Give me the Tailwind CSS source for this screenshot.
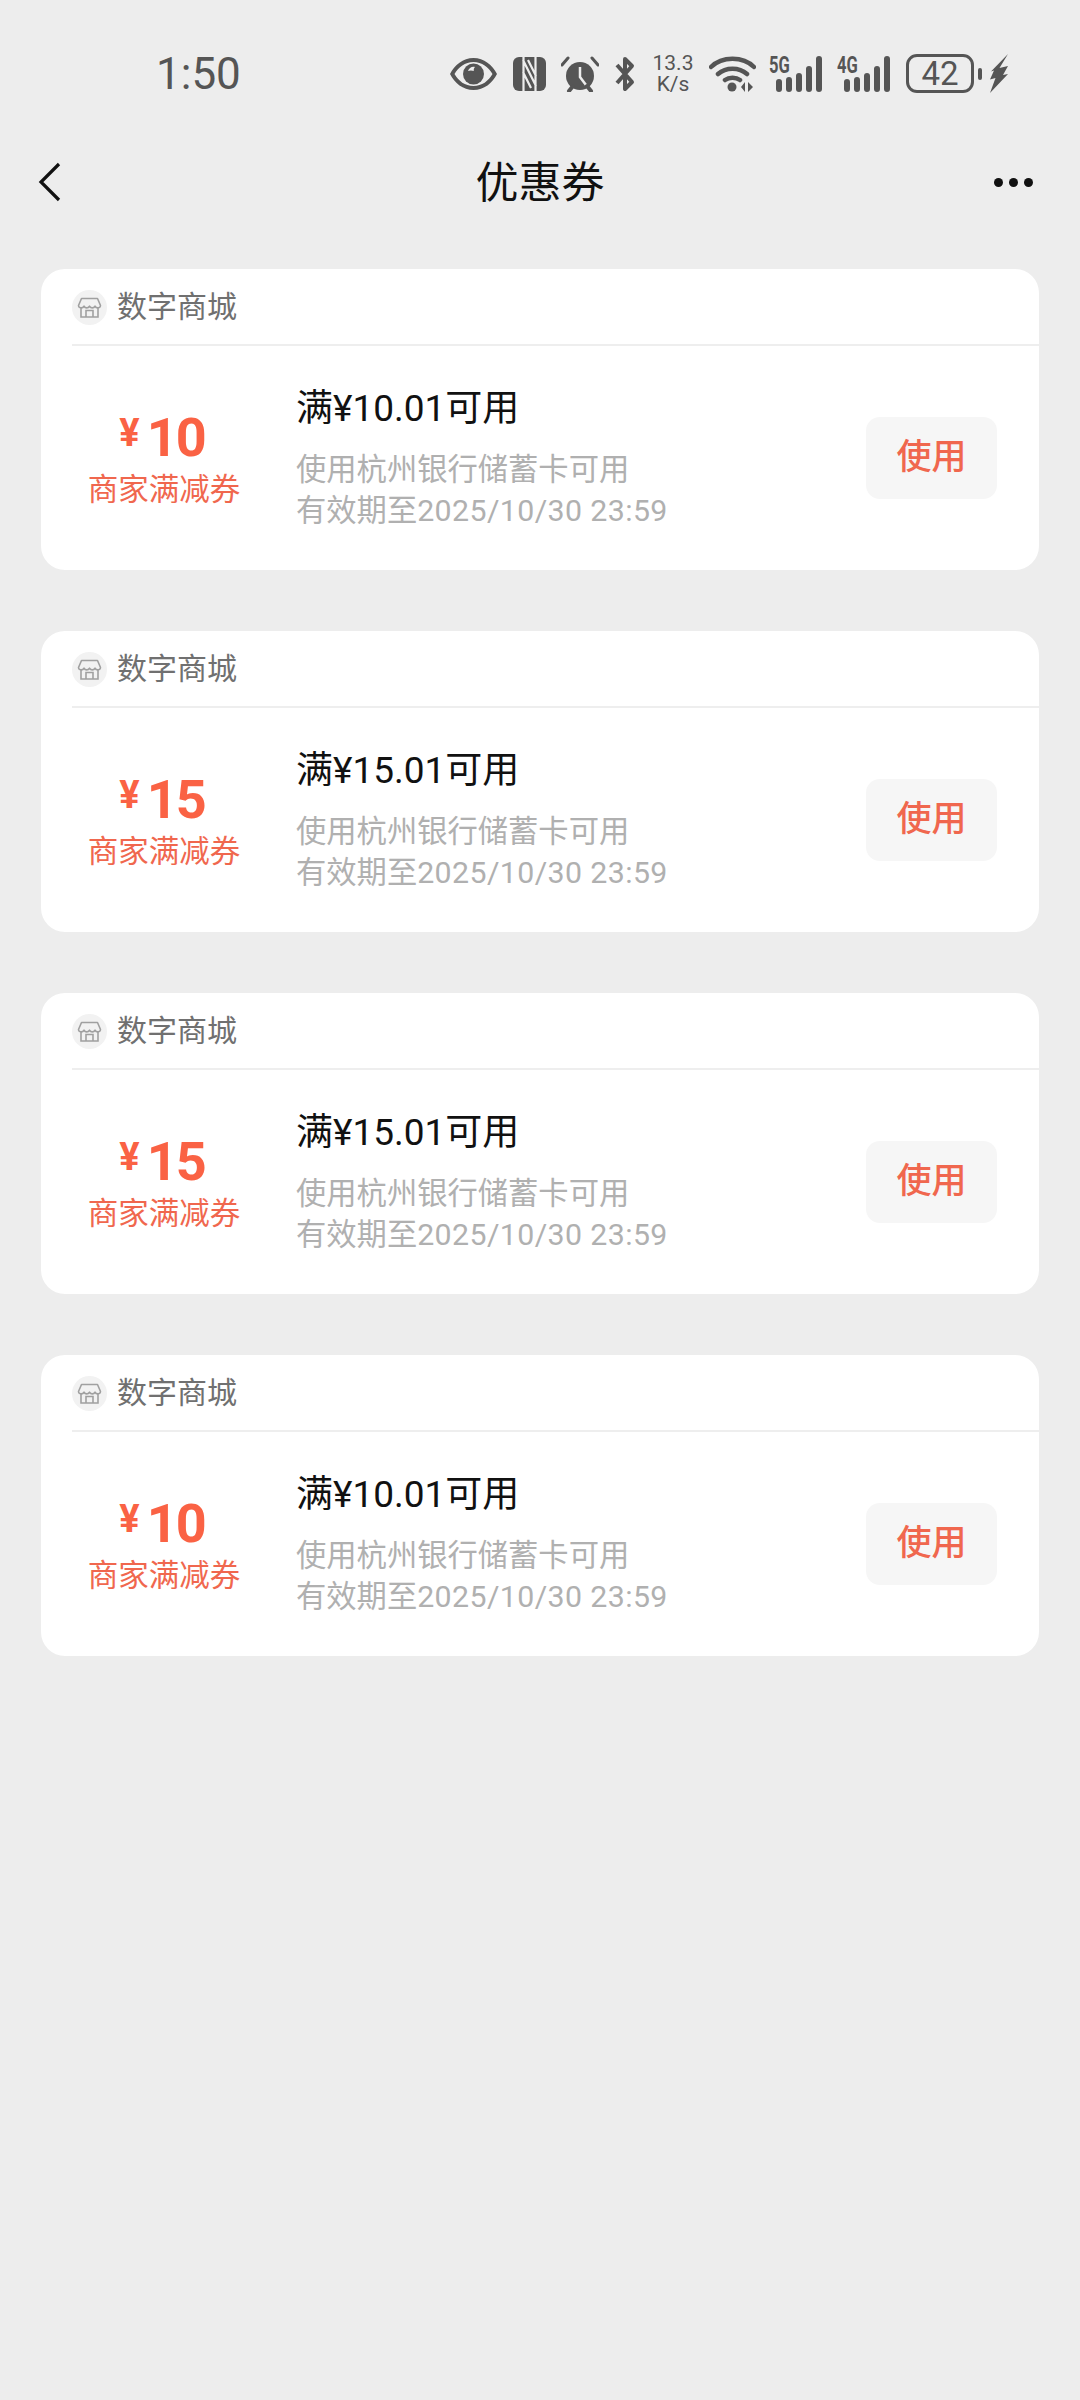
<!DOCTYPE html>
<html lang="zh-CN">
<head>
  <meta charset="UTF-8" />
  <title>优惠券</title>
  <script src="https://cdn.jsdelivr.net/npm/@tailwindcss/browser@4"></script>
</head>
<body class="bg-[#ededed] min-h-screen font-['Roboto','Noto_Sans_CJK_SC',sans-serif]">
  <svg width="0" height="0" class="absolute">
    <symbol id="store" viewBox="0 0 35 35">
      <circle cx="17.5" cy="17.500" r="17.500" fill="#f2f2f2" />
      <path d="M9.500 8.500h16l3 7c-.3 3-4.300 3-5.500.6-1.200 2.400-4.200 2.400-5.500 0-1.300 2.400-4.300 2.400-5.500 0-1.200 2.400-5.200 2.400-5.500-.6z" fill="none" stroke="#a0a0a0" stroke-width="1.600" stroke-linejoin="round" />
      <path d="M9 17v10h17V17M14 27v-6.500h7V27" fill="none" stroke="#a0a0a0" stroke-width="1.600" />
    </symbol>
    <symbol id="bars" viewBox="0 0 54 36">
      <path d="M10 33V26M20 33V24M30 33V20M40 33V13M50 33V3" stroke="#555" stroke-width="6" stroke-linecap="round" />
    </symbol>
  </svg>

  <!-- status bar -->
  <div class="h-[146px] flex items-start text-[#555555]">
    <div class="w-[450px] pt-[49px] pl-[156px] text-[44px] leading-[50px]">1:50</div>
    <div class="flex items-center h-[41px] mt-[53px] shrink-0">
      <svg class="w-[47px] h-[32px]" viewBox="0 0 47 32"><path fill-rule="evenodd" fill="#555" d="M23.500 0C34 0 42.500 7 47 16c-4.500 9-13 16-23.500 16S4.500 25 0 16C4.500 7 13 0 23.500 0zm0 4C15 4 8.500 9 4.500 16c4 7 10.500 12 19 12s15-5 19-12c-4-7-10.500-12-19-12z" /><circle cx="23.500" cy="16" r="10.500" fill="#555" /><path fill="#ededed" d="M18 13c1-3 4-5 7-4-1 1-1.500 2.500-1.200 4-1.800-.8-4-.8-5.800 0z" /></svg>
      <svg class="w-[33px] h-[34px] ml-[16px]" viewBox="0 0 33 34"><rect width="33" height="34" rx="6" fill="#555" /><path d="M10.500 0v34M22.500 0v34M10 3l13 26M10 15l8 16M15 3l8 16" fill="none" stroke="#ededed" stroke-width="2.200" /></svg>
      <svg class="w-[38px] h-[36px] ml-[15px]" viewBox="0 0 38 36"><circle cx="19" cy="20" r="14" fill="#555" /><path d="M19 11v10l6 8" fill="none" stroke="#ededed" stroke-width="2.500" /><path d="M1 9l6-7M37 9l-6-7" stroke="#555" stroke-width="3" stroke-linecap="round" /><path d="M8 35l4-5M30 35l-4-5" stroke="#555" stroke-width="4" stroke-linecap="round" /></svg>
      <svg class="w-[22px] h-[36px] ml-[15px]" viewBox="0 0 22 36"><path d="M3 9l15 17-7 7V3l7 7L3 27" fill="none" stroke="#555" stroke-width="4" stroke-linejoin="round" /></svg>
      <div class="w-[42px] ml-[16px] text-center text-[21px] leading-[21px]">13.3<br />K/s</div>
      <svg class="w-[47px] h-[37px] ml-[15px]" viewBox="0 0 47 37"><path d="M2 12C13 1 34 1 45 12M9 19c8-7 21-7 29 0M16 25c4-3 11-3 15 0" fill="none" stroke="#555" stroke-width="4.500" stroke-linecap="round" /><circle cx="23" cy="32" r="4.500" fill="#555" /><path fill="#555" d="M36 27v10l-4-5zM39 27v10l5-5z" /></svg>
      <div class="ml-[13px] w-[54px] h-[36px] relative">
        <span class="absolute left-0 top-0 text-[23px] leading-[20px] font-bold scale-x-[.72] origin-left">5G</span>
        <svg class="w-[54px] h-[36px]"><use href="#bars" /></svg>
      </div>
      <div class="ml-[14px] w-[54px] h-[36px] relative">
        <span class="absolute left-0 top-0 text-[23px] leading-[20px] font-bold scale-x-[.72] origin-left">4G</span>
        <svg class="w-[54px] h-[36px]"><use href="#bars" /></svg>
      </div>
      <div class="ml-[15px] w-[68px] h-[39px] rounded-[11px] border-[3px] border-[#555555] flex items-center justify-center text-[33px] leading-none">42</div>
      <div class="ml-[4px] w-[4px] h-[12px] bg-[#555555] rounded-full"></div>
      <svg class="w-[18px] h-[39px] ml-[8px]" viewBox="0 0 18 39"><path fill="#555" d="M18 0L9.500 14l8.500-2-5 9 5-1L0 39l5.500-15L0 25.500l4-9-3 1z" /></svg>
    </div>
  </div>

  <!-- nav -->
  <div class="h-[74px] relative flex items-center justify-center">
    <svg class="absolute left-[38px] top-[16px] w-[23px] h-[40px]" viewBox="0 0 23 40"><path d="M21 2L3 20l18 18" fill="none" stroke="#111" stroke-width="3.200" /></svg>
    <h1 class="text-[43px] leading-none text-[#111111]">优惠券</h1>
    <div class="absolute left-[994px] top-[32px] flex gap-[6px]">
      <span class="w-[9px] h-[9px] rounded-full bg-[#111111]"></span>
      <span class="w-[9px] h-[9px] rounded-full bg-[#111111]"></span>
      <span class="w-[9px] h-[9px] rounded-full bg-[#111111]"></span>
    </div>
  </div>

  <!-- coupons -->
  <div class="mt-[49px] px-[41px] flex flex-col gap-[61px]">

    <div class="bg-white rounded-[24px] h-[301px] flex flex-col">
      <div class="ml-[31px] h-[77px] border-b-[2px] border-[#eeeeee] flex items-center gap-[10px]">
        <svg class="w-[35px] h-[35px] mt-[2px]"><use href="#store" /></svg>
        <span class="text-[30px] leading-none text-[#707070]">数字商城</span>
      </div>
      <div class="flex-1 flex items-center pr-[42px]">
        <div class="w-[246px] flex flex-col items-center mt-[6px]">
          <div class="flex items-start gap-[7px] mr-[4px] text-[#fa6244] font-bold leading-[56px] mt-[-5px]"><span class="text-[38px] mt-[-5px]">¥</span><span class="text-[54px] tracking-[-2px]">10</span></div>
          <div class="mt-[6px] text-[30.5px] leading-[36px] text-[#f0674e]">商家满减券</div>
        </div>
        <div class="w-[9px]"></div>
        <div class="flex-1">
          <div class="text-[37px] leading-[46px] text-[#111111]">满¥10.01可用</div>
          <div class="mt-[17px] text-[30.3px] leading-[41px] text-[#b0b0b0]">使用杭州银行储蓄卡可用<br />有效期至<span class="tracking-[.4px]">2025/10/30 23:59</span></div>
        </div>
        <div class="w-[131px] h-[82px] rounded-[14px] bg-[#f6f6f6] flex items-center justify-center text-[35px] font-medium text-[#f0674e]">使用</div>
      </div>
    </div>

    <div class="bg-white rounded-[24px] h-[301px] flex flex-col">
      <div class="ml-[31px] h-[77px] border-b-[2px] border-[#eeeeee] flex items-center gap-[10px]">
        <svg class="w-[35px] h-[35px] mt-[2px]"><use href="#store" /></svg>
        <span class="text-[30px] leading-none text-[#707070]">数字商城</span>
      </div>
      <div class="flex-1 flex items-center pr-[42px]">
        <div class="w-[246px] flex flex-col items-center mt-[6px]">
          <div class="flex items-start gap-[7px] mr-[4px] text-[#fa6244] font-bold leading-[56px] mt-[-5px]"><span class="text-[38px] mt-[-5px]">¥</span><span class="text-[54px] tracking-[-2px]">15</span></div>
          <div class="mt-[6px] text-[30.5px] leading-[36px] text-[#f0674e]">商家满减券</div>
        </div>
        <div class="w-[9px]"></div>
        <div class="flex-1">
          <div class="text-[37px] leading-[46px] text-[#111111]">满¥15.01可用</div>
          <div class="mt-[17px] text-[30.3px] leading-[41px] text-[#b0b0b0]">使用杭州银行储蓄卡可用<br />有效期至<span class="tracking-[.4px]">2025/10/30 23:59</span></div>
        </div>
        <div class="w-[131px] h-[82px] rounded-[14px] bg-[#f6f6f6] flex items-center justify-center text-[35px] font-medium text-[#f0674e]">使用</div>
      </div>
    </div>

    <div class="bg-white rounded-[24px] h-[301px] flex flex-col">
      <div class="ml-[31px] h-[77px] border-b-[2px] border-[#eeeeee] flex items-center gap-[10px]">
        <svg class="w-[35px] h-[35px] mt-[2px]"><use href="#store" /></svg>
        <span class="text-[30px] leading-none text-[#707070]">数字商城</span>
      </div>
      <div class="flex-1 flex items-center pr-[42px]">
        <div class="w-[246px] flex flex-col items-center mt-[6px]">
          <div class="flex items-start gap-[7px] mr-[4px] text-[#fa6244] font-bold leading-[56px] mt-[-5px]"><span class="text-[38px] mt-[-5px]">¥</span><span class="text-[54px] tracking-[-2px]">15</span></div>
          <div class="mt-[6px] text-[30.5px] leading-[36px] text-[#f0674e]">商家满减券</div>
        </div>
        <div class="w-[9px]"></div>
        <div class="flex-1">
          <div class="text-[37px] leading-[46px] text-[#111111]">满¥15.01可用</div>
          <div class="mt-[17px] text-[30.3px] leading-[41px] text-[#b0b0b0]">使用杭州银行储蓄卡可用<br />有效期至<span class="tracking-[.4px]">2025/10/30 23:59</span></div>
        </div>
        <div class="w-[131px] h-[82px] rounded-[14px] bg-[#f6f6f6] flex items-center justify-center text-[35px] font-medium text-[#f0674e]">使用</div>
      </div>
    </div>

    <div class="bg-white rounded-[24px] h-[301px] flex flex-col">
      <div class="ml-[31px] h-[77px] border-b-[2px] border-[#eeeeee] flex items-center gap-[10px]">
        <svg class="w-[35px] h-[35px] mt-[2px]"><use href="#store" /></svg>
        <span class="text-[30px] leading-none text-[#707070]">数字商城</span>
      </div>
      <div class="flex-1 flex items-center pr-[42px]">
        <div class="w-[246px] flex flex-col items-center mt-[6px]">
          <div class="flex items-start gap-[7px] mr-[4px] text-[#fa6244] font-bold leading-[56px] mt-[-5px]"><span class="text-[38px] mt-[-5px]">¥</span><span class="text-[54px] tracking-[-2px]">10</span></div>
          <div class="mt-[6px] text-[30.5px] leading-[36px] text-[#f0674e]">商家满减券</div>
        </div>
        <div class="w-[9px]"></div>
        <div class="flex-1">
          <div class="text-[37px] leading-[46px] text-[#111111]">满¥10.01可用</div>
          <div class="mt-[17px] text-[30.3px] leading-[41px] text-[#b0b0b0]">使用杭州银行储蓄卡可用<br />有效期至<span class="tracking-[.4px]">2025/10/30 23:59</span></div>
        </div>
        <div class="w-[131px] h-[82px] rounded-[14px] bg-[#f6f6f6] flex items-center justify-center text-[35px] font-medium text-[#f0674e]">使用</div>
      </div>
    </div>

  </div>
</body>
</html>
